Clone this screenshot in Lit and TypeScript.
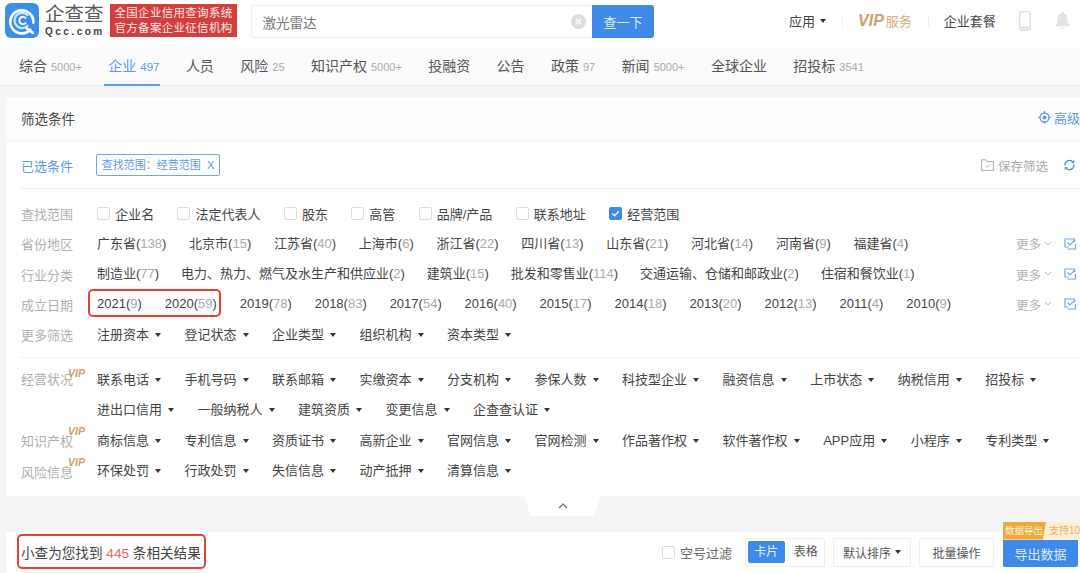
import { LitElement, html, css } from "lit";
import { customElement } from "lit/decorators.js";

const tabs: [string, string][] = [["综合","5000+"],["企业","497"],["人员",""],["风险","25"],["知识产权","5000+"],["投融资",""],["公告",""],["政策","97"],["新闻","5000+"],["全球企业",""],["招投标","3541"]];
const scope = ["企业名","法定代表人","股东","高管","品牌/产品","联系地址","经营范围"];
const provinces: [string,string][] = [["广东省","138"],["北京市","15"],["江苏省","40"],["上海市","6"],["浙江省","22"],["四川省","13"],["山东省","21"],["河北省","14"],["河南省","9"],["福建省","4"]];
const industries: [string,string][] = [["制造业","77"],["电力、热力、燃气及水生产和供应业","2"],["建筑业","15"],["批发和零售业","114"],["交通运输、仓储和邮政业","2"],["住宿和餐饮业","1"]];
const yearsA: [string,string][] = [["2021","9"],["2020","59"]];
const yearsB: [string,string][] = [["2019","78"],["2018","83"],["2017","54"],["2016","40"],["2015","17"],["2014","18"],["2013","20"],["2012","13"],["2011","4"],["2010","9"]];
const more = ["注册资本","登记状态","企业类型","组织机构","资本类型"];
const biz1 = ["联系电话","手机号码","联系邮箱","实缴资本","分支机构","参保人数","科技型企业","融资信息","上市状态","纳税信用","招投标"];
const biz2 = ["进出口信用","一般纳税人","建筑资质","变更信息","企查查认证"];
const ip = ["商标信息","专利信息","资质证书","高新企业","官网信息","官网检测","作品著作权","软件著作权","APP应用","小程序","专利类型"];
const risk = ["环保处罚","行政处罚","失信信息","动产抵押","清算信息"];

@customElement("app-root")
export class AppRoot extends LitElement {
  static styles = css`
    :host { display:block; width:1080px; height:573px; overflow:hidden; background:#f5f5f5; color:#444;
      font-family:"Liberation Sans","Noto Sans CJK SC",sans-serif; font-size:13px; }
    .head { height:47px; background:#fff; display:flex; align-items:flex-start; padding-left:5px; box-sizing:border-box; }
    .logo { width:34px; height:35px; margin-top:3px; flex:none; }
    .brand { margin-left:6px; width:59px; margin-top:3px; flex:none; }
    .brand b { display:block; font-weight:400; font-size:19.500px; line-height:22px; color:#5a5a5a; white-space:nowrap; }
    .brand i { display:block; font-style:normal; font-weight:700; font-size:10px; line-height:11px; letter-spacing:2.500px; color:#444; white-space:nowrap; margin-top:1px; }
    .slogan { margin-left:6px; margin-top:3.500px; width:127px; height:33.500px; background:#d23f3f; color:#fbe9e9; font-size:11.500px; line-height:15px;
      letter-spacing:.3px; text-align:center; padding-top:2px; box-sizing:border-box; white-space:nowrap; flex:none; }
    .search { margin-left:13.500px; margin-top:5px; width:341.500px; height:33px; flex:none; box-sizing:border-box; border:1px solid #eee; border-right:none; border-radius:3px 0 0 3px;
      display:flex; align-items:center; padding-left:11px; color:#777; font-size:13.500px; justify-content:space-between; padding-right:6px; }
    .clear { width:15px; height:15px; }
    .go { margin-top:5px; width:62px; height:33px; background:#3f8ae8; color:#dce9fb; font-size:13px; display:flex; align-items:center; justify-content:center; border-radius:0 3px 3px 0; flex:none; }
    .hr { display:flex; align-items:center; height:41px; margin-left:135px; color:#444; font-size:13px; flex:none; }
    .caret { display:inline-block; width:0; height:0; border-left:3.500px solid transparent; border-right:3.500px solid transparent; border-top:4px solid #333; }
    .hr .caret { margin-left:5px; }
    .sep { width:1px; height:12px; background:#eee; margin:0 15px 0 16px; }
    .vip { color:#cba36a; font-weight:700; font-style:italic; font-size:16px; }
    .svc { color:#d3ac76; font-size:13px; margin-left:2px; }
    .phone { margin-left:23px; }
    .bell { margin-left:24px; }
    .nav { height:38px; background:#fbfbfb; box-shadow:0 1px 2px rgba(0,0,0,.05); display:flex; padding-left:19px; gap:26.400px; box-sizing:border-box; align-items:center; }
    .tab { position:relative; font-size:14px; color:#555; white-space:nowrap; line-height:38px; }
    .tab small { font-size:11px; color:#aaa; margin-left:4px; }
    .tab.on { color:#5b9bec; }
    .tab.on small { color:#5b9bec; font-size:11.500px; }
    .tab.on::after { content:""; position:absolute; left:-4px; right:-1px; bottom:0; height:2px; background:#5b9bec; }
    .card { margin:12px 0 0 6px; background:#fff; height:399px; position:relative; }
    .title { height:45px; background:#fdfdfd; border-bottom:2px solid #f6f6f6; box-sizing:border-box; display:flex; align-items:center; justify-content:space-between; padding:0 0 2px 15px; font-size:13.500px; color:#444; }
    .adv { color:#5b9bec; display:flex; align-items:center; gap:3px; font-size:13px; width:42px; flex:none; overflow:hidden; white-space:nowrap; }
    .adv svg { flex:none; }
    .sel { height:47px; margin-left:14px; border-bottom:1px solid #f0f0f0; display:flex; align-items:center; box-sizing:border-box; padding-left:1px; }
    .sel .lab { color:#5b9bec; width:75px; flex:none; }
    .tag { border:1px solid #6ba6ee; border-radius:2px; color:#5b9bec; font-size:11px; height:22px; line-height:20px; width:124px; text-align:center; box-sizing:border-box; white-space:nowrap; }
    .save { margin-left:auto; display:flex; align-items:center; color:#aaa; font-size:12.500px; gap:4px; margin-right:5px; }
    .save .re { margin-left:12px; }
    .body { padding:9.500px 0 0 15px; }
    .row { display:flex; height:30.250px; align-items:center; }
    .lab { width:76px; flex:none; color:#b0b0b0; position:relative; font-size:13px; white-space:nowrap; }
    .lab sup { position:absolute; left:47px; top:-5px; line-height:10px; font-size:10.500px; font-weight:700; font-style:italic; color:#cba36a; }
    .items { display:flex; column-gap:22.700px; row-gap:0; align-items:center; flex-wrap:wrap; white-space:nowrap; color:#444; flex:1; min-width:0; }
    .items.ind { column-gap:21.800px; }
    .items.years { column-gap:22.900px; }
    .items.drop { column-gap:23.500px; }
    .items.scope { column-gap:23.200px; }
    .it { line-height:30px; }
    .it em { font-style:normal; color:#aaa; }
    .dd { display:flex; align-items:center; line-height:30px; }
    .dd .caret { margin-left:6px; }
    .chk { display:flex; align-items:center; }
    .box { width:13px; height:13px; border:1px solid #ddd; border-radius:2px; margin-right:5.200px; box-sizing:border-box; background:#fff; display:block; flex:none; }
    .box.on { background:#3f8ae8; border-color:#3f8ae8; }
    .mark { margin-left:auto; display:flex; align-items:center; color:#b0b0b0; font-size:12.500px; margin-right:4px; flex:none; }
    .mark .ch { margin:0 0 0 3px; }
    .mark .ed { margin-left:12px; }
    .ring { position:relative; display:flex; column-gap:22.900px; }
    .ring::before { content:""; position:absolute; left:-9px; right:-4px; top:0; bottom:2px; border:2px solid #e8402f; border-radius:5px; pointer-events:none; }
    .div { height:1px; background:#f0f0f0; margin:7px 0 7.500px; }
    .multi { height:60.500px; align-items:flex-start; }
    .multi .lab { line-height:30px; }
    .multi .lab sup { top:3px; }
    .fold { position:absolute; left:518px; top:399px; width:77px; height:20px; background:#fff; clip-path:polygon(0 0,100% 0,91% 100%,9% 100%); display:flex; justify-content:center; padding-top:7px; box-sizing:border-box; }
    .bar { margin:35.500px 0 0 6px; height:41px; background:#fff; display:flex; align-items:center; padding-left:15px; box-sizing:border-box; position:relative; }
    .found { font-size:13.600px; color:#444; position:relative; white-space:nowrap; }
    .found b { color:#f0606a; font-weight:400; }
    .found::before { content:""; position:absolute; left:-4px; right:-5px; top:-8px; bottom:-7px; border:2px solid #e8402f; border-radius:5px; }
    .ctl { margin-left:auto; display:flex; align-items:center; }
    .nullf { color:#666; margin-right:13px; display:flex; align-items:center; margin-top:1px; }
    .nullf .box { margin-right:5px; }
    .seg { width:80px; height:29px; border:1px solid #eee; border-radius:2px; box-sizing:border-box; display:flex; align-items:center; padding-left:2px; font-size:12px; color:#555; }
    .seg span { width:37px; height:22px; line-height:22px; text-align:center; border-radius:2px; }
    .seg .a { background:#3f8ae8; color:#e6f0fd; margin-right:3px; }
    .btn { height:29px; border:1px solid #eee; border-radius:2px; box-sizing:border-box; display:flex; align-items:center; justify-content:center; font-size:12px; color:#555; margin-left:8px; }
    .btn .caret { margin-left:4px; }
    .b1 { width:78px; } .b2 { width:75px; }
    .exp { position:relative; width:75px; height:27px; margin:2px 2px 0 9px; background:#3f8ae8; color:#dce9fb; font-size:13px; display:flex; align-items:center; justify-content:center; border-radius:0 0 2px 2px; }
    .pill { position:absolute; left:0; top:-18px; height:18px; width:77px; display:flex; font-size:9.500px; line-height:18px; white-space:nowrap; background:#fcefd8; overflow:hidden; }
    .pill span:first-child { background:#eeaa3c; color:#fdf3df; width:43px; padding-left:2px; box-sizing:border-box; clip-path:polygon(0 0,100% 0,93% 100%,0 100%); flex:none; }
    .pill span:last-child { color:#e6b15e; padding-left:3px; font-size:10px; }
  `;

  private caret() { return html`<span class="caret"></span>`; }
  private num(l: [string,string][]) { return l.map(([a,b]) => html`<span class="it">${a}(<em>${b}</em>)</span>`); }
  private dds(l: string[]) { return l.map(t => html`<span class="dd">${t}${this.caret()}</span>`); }
  private mark() {
    return html`<span class="mark">更多
      <svg class="ch" width="8" height="6" viewBox="0 0 8 6"><path d="M1 1l3 3 3-3" fill="none" stroke="#bbb"/></svg>
      <svg class="ed" width="12" height="12" viewBox="0 0 12 12"><path d="M10.500 4V1H1v8h3.500M3.500 11h8V6" fill="none" stroke="#6ba6ee" stroke-width="1.200"/><path d="M3.500 4.500l2.500 2.500 5-5" fill="none" stroke="#6ba6ee" stroke-width="1.200"/></svg>
    </span>`;
  }

  render() {
    return html`
      <div class="head">
        <svg class="logo" viewBox="0 0 33 34">
          <rect width="33" height="34" rx="6" fill="#3b8fe9"/>
          <path d="M24.500 26A11.200 11.200 0 1 1 27.500 19" fill="none" stroke="#fff" stroke-width="2.600" stroke-linecap="round"/>
          <path d="M21 24.500l6 4.500" stroke="#fff" stroke-width="2.600" stroke-linecap="round"/>
          <path d="M22.500 12.500A7.400 7.400 0 1 0 22.500 21.500" fill="none" stroke="#cfe5fb" stroke-width="2.200"/>
          <path d="M20.500 15A3.600 3.600 0 1 0 20.500 19" fill="none" stroke="#fff" stroke-width="1.800"/>
        </svg>
        <div class="brand"><b>企查查</b><i>Qcc.com</i></div>
        <div class="slogan">全国企业信用查询系统<br>官方备案企业征信机构</div>
        <div class="search">激光雷达
          <svg class="clear" viewBox="0 0 15 15"><circle cx="7.500" cy="7.500" r="7.500" fill="#ddd"/><path d="M4.800 4.800l5.400 5.400M10.200 4.800l-5.400 5.400" stroke="#fff" stroke-width="1.400"/></svg>
        </div>
        <div class="go">查一下</div>
        <div class="hr">
          <span>应用</span>${this.caret()}
          <span class="sep"></span>
          <span class="vip">VIP</span><span class="svc">服务</span>
          <span class="sep"></span>
          <span>企业套餐</span>
          <svg class="phone" width="12" height="20" viewBox="0 0 12 20"><rect x=".7" y=".7" width="10.600" height="18.600" rx="2" fill="#fff" stroke="#ddd" stroke-width="1.300"/><rect x="2" y="15.500" width="8" height="3" fill="#e4e4e4"/></svg>
          <svg class="bell" width="15" height="18" viewBox="0 0 16 19"><path d="M8 0c1 0 1.500.7 1.500 1.500C12 2.300 13.300 4.500 13.300 7.500c0 3.500.9 5 2.200 6.500v1H.5v-1C1.800 12.500 2.700 11 2.700 7.500c0-3 1.300-5.200 3.800-6C6.500.7 7 0 8 0z" fill="#e2e2e2"/><path d="M6 16.300h4a2 1.800 0 0 1-4 0z" fill="#e2e2e2"/></svg>
        </div>
      </div>
      <div class="nav">
        ${tabs.map(([t,c],i)=>html`<div class="tab ${i===1?"on":""}">${t}${c?html`<small>${c}</small>`:""}</div>`)}
      </div>
      <div class="card">
        <div class="title"><span>筛选条件</span>
          <span class="adv"><svg width="13" height="13" viewBox="0 0 13 13"><circle cx="6.500" cy="6.500" r="4.500" fill="none" stroke="#5b9bec" stroke-width="1.300"/><circle cx="6.500" cy="6.500" r="2" fill="#5b9bec"/><path d="M6.500 0v2M6.500 11v2M0 6.500h2M11 6.500h2" stroke="#5b9bec" stroke-width="1.200"/></svg>高级</span>
        </div>
        <div class="sel">
          <span class="lab">已选条件</span>
          <span class="tag">查找范围：经营范围&nbsp;&nbsp;X</span>
          <span class="save">
            <svg width="13" height="12" viewBox="0 0 13 12"><path d="M.6 11.400V.8h4l1.200 1.700h6.600v8.900z" fill="none" stroke="#aaa"/><path d="M4.500 6.800l1.500 1.500 2.700-2.700" fill="none" stroke="#aaa"/></svg>
            保存筛选
            <svg class="re" width="11" height="12" viewBox="0 0 11 12"><path d="M1 6.500A4.500 4.500 0 0 1 8.500 2.600M10 5.500A4.500 4.500 0 0 1 2.500 9.400" fill="none" stroke="#4a90e8" stroke-width="1.400"/><path d="M7 4h3.300V.8zM4 8H.7v3.200z" fill="#4a90e8"/></svg>
          </span>
        </div>
        <div class="body">
          <div class="row"><span class="lab">查找范围</span><div class="items scope">
            ${scope.map((s,i)=>html`<span class="chk">${i===6
              ? html`<svg class="box on" viewBox="0 0 12 12"><path d="M2.500 6l2.500 2.500 4.500-5" fill="none" stroke="#fff" stroke-width="1.500"/></svg>`
              : html`<span class="box"></span>`}${s}</span>`)}
          </div></div>
          <div class="row"><span class="lab">省份地区</span><div class="items">${this.num(provinces)}</div>${this.mark()}</div>
          <div class="row"><span class="lab">行业分类</span><div class="items ind">${this.num(industries)}</div>${this.mark()}</div>
          <div class="row"><span class="lab">成立日期</span><div class="items years"><span class="ring">${this.num(yearsA)}</span>${this.num(yearsB)}</div>${this.mark()}</div>
          <div class="row"><span class="lab">更多筛选</span><div class="items drop">${this.dds(more)}</div></div>
          <div class="div"></div>
          <div class="row multi"><span class="lab">经营状况<sup>VIP</sup></span><div class="items drop">${this.dds(biz1)}${this.dds(biz2)}</div></div>
          <div class="row"><span class="lab">知识产权<sup>VIP</sup></span><div class="items drop">${this.dds(ip)}</div></div>
          <div class="row"><span class="lab">风险信息<sup>VIP</sup></span><div class="items drop">${this.dds(risk)}</div></div>
        </div>
        <div class="fold"><svg width="10" height="6" viewBox="0 0 10 6"><path d="M1 5l4-4 4 4" fill="none" stroke="#777" stroke-width="1.300"/></svg></div>
      </div>
      <div class="bar">
        <span class="found">小查为您找到 <b>445</b> 条相关结果</span>
        <div class="ctl">
          <span class="nullf"><span class="box"></span>空号过滤</span>
          <div class="seg"><span class="a">卡片</span><span>表格</span></div>
          <div class="btn b1">默认排序${this.caret()}</div>
          <div class="btn b2">批量操作</div>
          <div class="exp">导出数据<div class="pill"><span>数据导出</span><span>支持10万</span></div></div>
        </div>
      </div>
    `;
  }
}
